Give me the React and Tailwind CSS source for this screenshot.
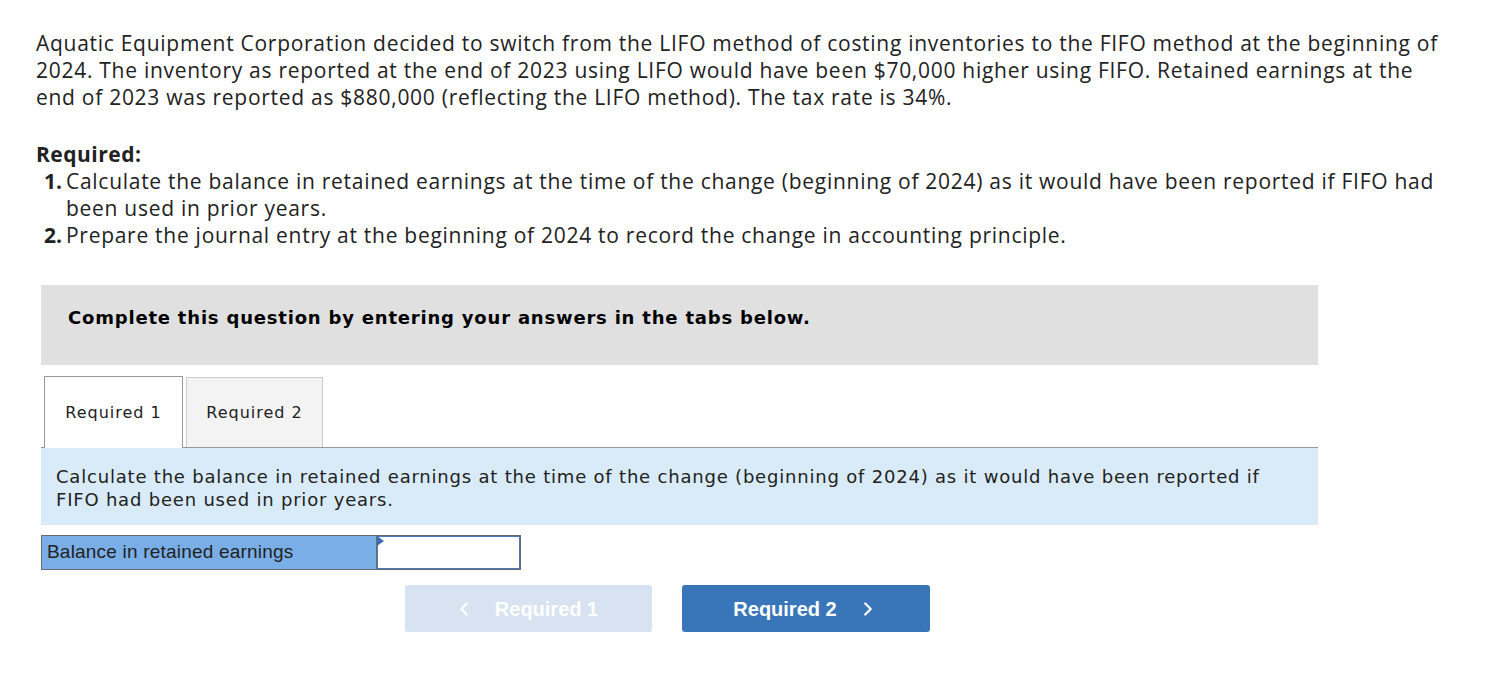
import React, { useState } from 'react';
import { ChevronLeft, ChevronRight } from 'lucide-react';

const App = () => {
  const [tab, setTab] = useState(1);
  const [balance, setBalance] = useState('');

  return (
    <div className="min-h-screen bg-white text-[#222]">
      <div className="pl-[36px] pt-[30px]" style={{ fontFamily: '"Open Sans", sans-serif' }}>
        <p className="text-[21px] leading-[27px] tracking-[0.72px] w-[1414px]">
          Aquatic Equipment Corporation decided to switch from the LIFO method of costing inventories to the FIFO method at the beginning of 2024. The inventory as reported at the end of 2023 using LIFO would have been $70,000 higher using FIFO. Retained earnings at the end of 2023 was reported as $880,000 (reflecting the LIFO method). The tax rate is 34%.
        </p>

        <div className="mt-[30px] text-[21px] leading-[27px] tracking-[0.72px]">
          <p className="font-bold tracking-[0.5px]">Required:</p>
          <ol className="w-[1416px]">
            <li className="flex">
              <span className="font-bold w-[30px] text-right pr-[4px] tracking-normal">1.</span>
              <span className="flex-1">Calculate the balance in retained earnings at the time of the change (beginning of 2024) as it would have been reported if FIFO had been used in prior years.</span>
            </li>
            <li className="flex">
              <span className="font-bold w-[30px] text-right pr-[4px] tracking-normal">2.</span>
              <span className="flex-1">Prepare the journal entry at the beginning of 2024 to record the change in accounting principle.</span>
            </li>
          </ol>
        </div>
      </div>

      <div className="ml-[41px] mt-[36px] w-[1277px]" style={{ fontFamily: '"DejaVu Sans", Verdana, sans-serif' }}>
        <div className="bg-[#e0e0e0] h-[80px] pt-[22px] pl-[27px]">
          <p className="font-bold text-[18px] leading-[22px] tracking-[0.8px] text-black">Complete this question by entering your answers in the tabs below.</p>
        </div>

        <div className="flex items-end gap-[3px] pl-[3px] mt-[12px] h-[71px] border-b border-[#999]">
          <button
            onClick={() => setTab(1)}
            className={`w-[139px] text-[16px] tracking-[1px] border border-b-0 ${tab === 1 ? 'bg-white border-[#999] h-[72px] -mb-px' : 'bg-[#f3f3f3] border-[#ccc] h-[70px]'}`}
          >
            Required 1
          </button>
          <button
            onClick={() => setTab(2)}
            className={`w-[137px] text-[16px] tracking-[1px] border border-b-0 ${tab === 2 ? 'bg-white border-[#999] h-[72px] -mb-px' : 'bg-[#f3f3f3] border-[#ccc] h-[70px]'}`}
          >
            Required 2
          </button>
        </div>

        <div className="bg-[#d9ebf9] h-[77px] pl-[15px] pt-[17px] text-[18px] leading-[23px] tracking-[0.8px] text-[#222]">
          <p className="w-[1225px]">Calculate the balance in retained earnings at the time of the change (beginning of 2024) as it would have been reported if FIFO had been used in prior years.</p>
        </div>

        <div className="flex mt-[10px] h-[35px]" style={{ fontFamily: '"Liberation Sans", Arial, sans-serif' }}>
          <div className="w-[336px] bg-[#7aaee6] border border-[#6a6a6a] flex items-center pl-[5px] text-[19px] tracking-[0.2px] text-[#222]">
            Balance in retained earnings
          </div>
          <div className="relative w-[144px] border border-l-0 border-[#6a6a6a] bg-white">
            <div className="h-full w-full border border-[#4a7ab5]">
              <input
                value={balance}
                onChange={(e) => setBalance(e.target.value)}
                className="w-full h-full outline-none px-2 text-right"
              />
            </div>
            <span className="absolute left-0 top-0 w-0 h-0 border-l-[7px] border-l-[#3a6fb5] border-y-[5px] border-y-transparent"></span>
          </div>
        </div>

        <div className="flex gap-[30px] mt-[15px] ml-[364px]" style={{ fontFamily: '"Liberation Sans", Arial, sans-serif' }}>
          <button disabled className="w-[247px] h-[47px] rounded-[3px] bg-[#d7e3f1] text-white font-bold text-[20px] flex items-center justify-center gap-[20px]">
            <ChevronLeft size={22} strokeWidth={2.5} className="-ml-[6px]" />
            <span>Required 1</span>
          </button>
          <button onClick={() => setTab(2)} className="w-[248px] h-[47px] rounded-[3px] bg-[#3876b9] text-white font-bold text-[20px] flex items-center justify-center gap-[20px]">
            <span>Required 2</span>
            <ChevronRight size={22} strokeWidth={2.5} />
          </button>
        </div>
      </div>
    </div>
  );
};

export default App;
